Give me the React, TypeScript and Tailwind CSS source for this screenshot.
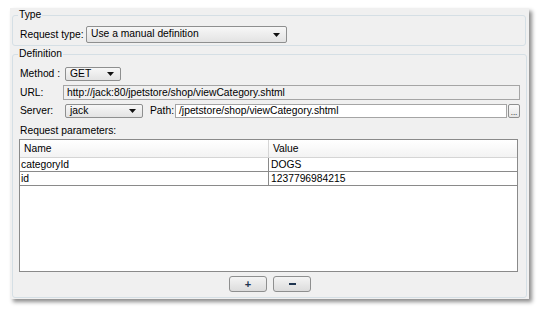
import React from 'react';

const Arrow = () => (
  <svg width="7" height="4" viewBox="0 0 7 4" className="shrink-0">
    <polygon points="0,0 7,0 3.5,4" fill="#111" />
  </svg>
);

const Combo: React.FC<{ value: string; className: string }> = ({ value, className }) => (
  <div
    className={`flex items-center justify-between border border-[#8e8f8f] rounded-[2px] bg-gradient-to-b from-[#f7f7f7] to-[#e3e3e3] pl-[4px] pr-[6px] ${className}`}
  >
    <span className="leading-none">{value}</span>
    <Arrow />
  </div>
);

const rows = [
  { name: 'categoryId', value: 'DOGS' },
  { name: 'id', value: '1237796984215' },
];

export default function App() {
  return (
    <div
      className="w-[540px] h-[312px] bg-white pt-[8px] pl-[10px] text-[10.3px] text-black"
      style={{ fontFamily: '"Liberation Sans", Arial, sans-serif' }}
    >
      <div className="w-[519px] h-[291px] bg-[#f0f0f0] pl-[2px] pt-[1px] shadow-[3px_3px_4px_rgba(0,0,0,0.45)]">
        {/* Type */}
        <fieldset className="w-[514px] border border-[#d5dfe5] rounded-[3px] pl-[7px] pr-[6px] pb-[2px]">
          <legend className="-ml-[2px] px-[1px] leading-[12px]">Type</legend>
          <div className="flex items-center mt-[5px] h-[17px]">
            <span className="w-[66px]">Request type:</span>
            <Combo value="Use a manual definition" className="w-[201px] h-[17px]" />
          </div>
        </fieldset>

        {/* Definition */}
        <fieldset className="w-[514px] h-[250px] mt-[2px] border border-[#d5dfe5] rounded-[3px] pl-[7px] pr-[6px] flex flex-col">
          <legend className="-ml-[2px] px-[1px] leading-[12px]">Definition</legend>

          <div className="flex items-center mt-[7px] h-[14px]">
            <span className="w-[45px]">Method :</span>
            <Combo value="GET" className="w-[56px] h-[14px]" />
          </div>

          <div className="flex items-center mt-[4px] h-[15px]">
            <span className="w-[43px]">URL:</span>
            <div className="flex-1 h-[15px] border border-[#a5a5a5] bg-[#f0f0f0] flex items-center pl-[3px]">
              http://jack:80/jpetstore/shop/viewCategory.shtml
            </div>
          </div>

          <div className="flex items-center mt-[4px] h-[14px]">
            <span className="w-[45px]">Server:</span>
            <Combo value="jack" className="w-[78px] h-[14px]" />
            <span className="ml-[7px] w-[25px]">Path:</span>
            <div className="w-[332px] h-[14px] border border-[#a5a5a5] bg-white flex items-center pl-[3px]">
              /jpetstore/shop/viewCategory.shtml
            </div>
            <div className="ml-[1px] w-[12px] h-[14px] border border-[#8e8f8f] rounded-[2px] bg-gradient-to-b from-[#fafafa] to-[#e6e6e6] flex items-end justify-center text-[8px] leading-[9px]">
              ...
            </div>
          </div>

          <div className="mt-[7px] h-[12px] leading-[12px]">Request parameters:</div>

          <div className="mt-[2px] -ml-[1px] w-[499px] h-[133px] border border-[#8a8a8a] bg-white">
            <div className="flex h-[18px] border-b border-[#d5d5d5] bg-gradient-to-b from-[#ffffff] to-[#f3f3f3]">
              <div className="w-[249px] border-r border-[#d5d5d5] pl-[4px] flex items-center">Name</div>
              <div className="flex-1 pl-[4px] flex items-center">Value</div>
            </div>
            {rows.map(r => (
              <div key={r.name} className="flex h-[14px] border-b border-[#8a8a8a]">
                <div className="w-[249px] border-r border-[#8a8a8a] pl-[1px] flex items-center">{r.name}</div>
                <div className="flex-1 pl-[2px] flex items-center">{r.value}</div>
              </div>
            ))}
          </div>

          <div className="flex justify-center gap-[6px] mt-[4px]">
            <button className="w-[38px] h-[16px] border border-[#8e8f8f] rounded-[3px] bg-gradient-to-b from-[#f4f4f4] to-[#dcdcdc] flex items-center justify-center text-[#1f3550] font-bold text-[11px] leading-none">
              +
            </button>
            <button className="w-[38px] h-[16px] border border-[#8e8f8f] rounded-[3px] bg-gradient-to-b from-[#f4f4f4] to-[#dcdcdc] flex items-center justify-center">
              <span className="block w-[7px] h-[2px] bg-[#1f3550]" />
            </button>
          </div>
        </fieldset>
      </div>
    </div>
  );
}
